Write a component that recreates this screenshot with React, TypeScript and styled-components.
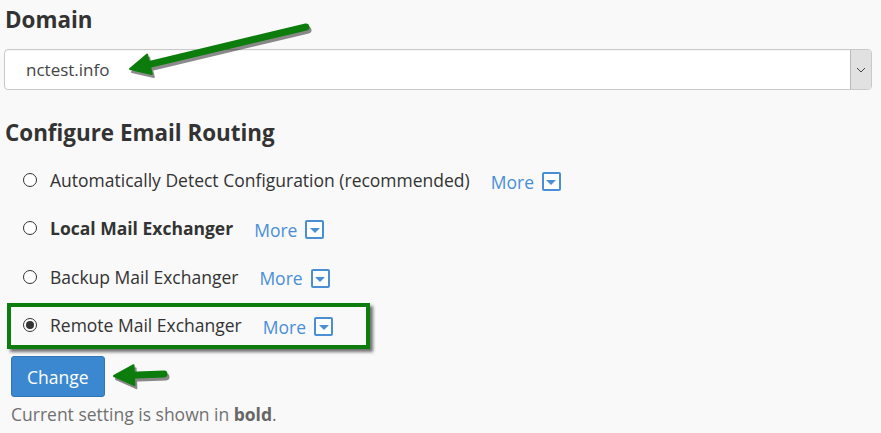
import React from "react";
import styled, { createGlobalStyle } from "styled-components";

const GlobalStyle = createGlobalStyle`
  html, body {
    margin: 0;
    padding: 0;
    background: #f9f9f9;
  }
  body {
    font-family: "Open Sans", "Noto Sans", sans-serif;
    color: #333;
  }
`;

const Page = styled.div`
  position: relative;
  width: 881px;
  height: 433px;
  padding: 0 9px 0 4px;
  box-sizing: border-box;
  overflow: hidden;
`;

const Heading = styled.h2<{ $top: number }>`
  margin: ${(p) => p.$top}px 0 0 1px;
  font-size: 22.4px;
  line-height: 30px;
  font-weight: 700;
  color: #333;
`;

const SelectBox = styled.div`
  margin-top: 14px;
  height: 41px;
  box-sizing: border-box;
  border: 1px solid #c9c9c9;
  border-radius: 4px;
  background: #fff;
  display: flex;
  align-items: stretch;
  box-shadow: inset 0 1px 1px rgba(0, 0, 0, 0.04);
`;

const SelectValue = styled.div`
  flex: 1;
  display: flex;
  align-items: center;
  padding-left: 21px;
  font-size: 17px;
  color: #444;
`;

const SelectButton = styled.div`
  width: 20px;
  background: #e1e1e1;
  border-left: 1px solid #b9b9b9;
  border-radius: 0 3px 3px 0;
  display: flex;
  align-items: center;
  justify-content: center;
`;

const OptionList = styled.div`
  margin-top: 8px;
  padding-left: 19px;
  display: flex;
  flex-direction: column;
`;

const OptionRow = styled.div<{ $highlight?: boolean }>`
  position: relative;
  height: 48.3px;
  display: flex;
  align-items: center;
  width: fit-content;

  ${(p) =>
    p.$highlight &&
    `
    &::after {
      content: "";
      position: absolute;
      left: -16px;
      right: -37px;
      top: 2px;
      bottom: 0px;
      border: 4px solid #0c7c0c;
      box-shadow: 3px 3px 3px rgba(0, 0, 0, 0.55);
      pointer-events: none;
    }
  `}
`;

const Radio = styled.span<{ $checked?: boolean }>`
  width: 14px;
  height: 14px;
  box-sizing: border-box;
  border: 1px solid #333;
  border-radius: 50%;
  background: #fff;
  display: inline-flex;
  align-items: center;
  justify-content: center;
  margin-right: 13px;

  &::before {
    content: "";
    width: 8px;
    height: 8px;
    border-radius: 50%;
    background: ${(p) => (p.$checked ? "#333" : "transparent")};
  }
`;

const Label = styled.span<{ $bold?: boolean }>`
  font-size: 17.5px;
  line-height: 24px;
  font-weight: ${(p) => (p.$bold ? 700 : 400)};
  color: #333;
`;

const MoreLink = styled.a`
  margin-left: 21px;
  padding-top: 3px;
  display: inline-flex;
  align-items: center;
  gap: 8px;
  font-size: 17.5px;
  line-height: 24px;
  color: #4a8fd6;
  text-decoration: none;
`;

const MoreIcon = styled.span`
  width: 19px;
  height: 19px;
  box-sizing: border-box;
  border: 2px solid #4a8fd6;
  border-radius: 2px;
  display: inline-flex;
  align-items: center;
  justify-content: center;
  background: #fff;

  &::before {
    content: "";
    width: 0;
    height: 0;
    margin-top: 2px;
    border-left: 5px solid transparent;
    border-right: 5px solid transparent;
    border-top: 5px solid #4a8fd6;
  }
`;

const ChangeButton = styled.button`
  margin: 7px 0 0 7px;
  height: 41px;
  padding: 0 15px;
  box-sizing: border-box;
  background: #3b88d1;
  border: 1px solid #2f75b8;
  border-radius: 3px;
  color: #fff;
  font-family: "Open Sans", sans-serif;
  font-size: 17.5px;
  display: block;
`;

const Note = styled.p`
  margin: 5px 0 0 7px;
  font-size: 17.5px;
  line-height: 24px;
  color: #707070;

  b {
    color: #666;
  }
`;

const ArrowLayer = styled.svg`
  position: absolute;
  left: 0;
  top: 0;
  pointer-events: none;
`;

const options = [
  { label: "Automatically Detect Configuration (recommended)" },
  { label: "Local Mail Exchanger", bold: true },
  { label: "Backup Mail Exchanger" },
  { label: "Remote Mail Exchanger", checked: true },
];

function Arrow({
  x1,
  y1,
  x2,
  y2,
}: {
  x1: number;
  y1: number;
  x2: number;
  y2: number;
}) {
  const angle = Math.atan2(y2 - y1, x2 - x1);
  const len = 20;
  const half = 10;
  const bx = x2 - Math.cos(angle) * len;
  const by = y2 - Math.sin(angle) * len;
  const px = -Math.sin(angle) * half;
  const py = Math.cos(angle) * half;
  const head = `${x2},${y2} ${bx + px},${by + py} ${bx - px},${by - py}`;
  const sx = bx + Math.cos(angle) * 4;
  const sy = by + Math.sin(angle) * 4;
  return (
    <g>
      <g transform="translate(2,3)" opacity="0.45">
        <line x1={x1} y1={y1} x2={sx} y2={sy} stroke="#000" strokeWidth="7" strokeLinecap="round" />
        <polygon points={head} fill="#000" stroke="#000" strokeWidth="2" strokeLinejoin="round" />
      </g>
      <line x1={x1} y1={y1} x2={sx} y2={sy} stroke="#0c7c0c" strokeWidth="7" strokeLinecap="round" />
      <polygon points={head} fill="#0c7c0c" stroke="#0c7c0c" strokeWidth="2" strokeLinejoin="round" />
    </g>
  );
}

export default function App() {
  return (
    <>
      <GlobalStyle />
      <Page>
        <Heading $top={5}>Domain</Heading>
        <SelectBox>
          <SelectValue>nctest.info</SelectValue>
          <SelectButton>
            <svg width="10" height="6" viewBox="0 0 10 6">
              <path d="M1 1 L5 5 L9 1" fill="none" stroke="#444" strokeWidth="1" />
            </svg>
          </SelectButton>
        </SelectBox>
        <Heading $top={28}>Configure Email Routing</Heading>
        <OptionList>
          {options.map((o) => (
            <OptionRow key={o.label} $highlight={o.checked}>
              <Radio $checked={o.checked} />
              <Label $bold={o.bold}>{o.label}</Label>
              <MoreLink href="#">
                More
                <MoreIcon />
              </MoreLink>
            </OptionRow>
          ))}
        </OptionList>
        <ChangeButton>Change</ChangeButton>
        <Note>
          Current setting is shown in <b>bold</b>.
        </Note>
        <ArrowLayer width="881" height="433">
          <Arrow x1={306} y1={27} x2={130} y2={69} />
          <Arrow x1={164} y1={374} x2={114} y2={376} />
        </ArrowLayer>
      </Page>
    </>
  );
}
